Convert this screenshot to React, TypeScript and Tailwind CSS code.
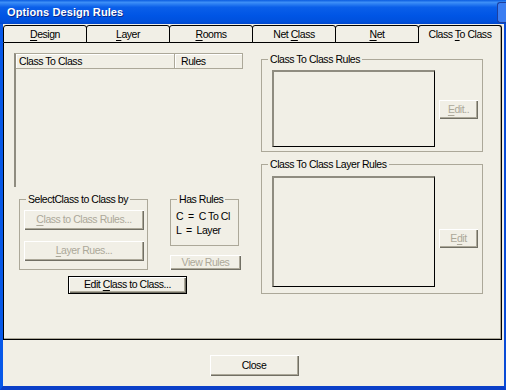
import clsx from "clsx";
import type { ReactNode } from "react";

// Win XP style "Options Design Rules" dialog, Class To Class tab

const FACE = "bg-[#f1efe6]";
const RAISED =
  "shadow-[inset_1px_1px_0_#fff,inset_-1px_-1px_0_#716f64,inset_-2px_-2px_0_#aca899]";

function U({ children }: { children: ReactNode }) {
  return <span className="underline decoration-1 underline-offset-[2px]">{children}</span>;
}

function Btn({
  children,
  disabled,
  isDefault,
  className,
}: {
  children: ReactNode;
  disabled?: boolean;
  isDefault?: boolean;
  className?: string;
}) {
  return (
    <div
      className={clsx(
        "flex shrink-0 whitespace-nowrap",
        isDefault && "border border-black",
        disabled ? "text-[#aca899]" : "text-black",
        className
      )}
    >
      <div className={clsx("flex flex-1 items-center justify-center pb-px", RAISED)}>
        {children}
      </div>
    </div>
  );
}

function Group({
  label,
  className,
  children,
}: {
  label: string;
  className?: string;
  children?: ReactNode;
}) {
  return (
    <div className={clsx("relative shrink-0 border border-[#aca899]", className)}>
      <span
        className={clsx(
          "absolute -top-[8px] left-[6px] whitespace-nowrap px-[2px] leading-[14px]",
          FACE
        )}
      >
        {label}
      </span>
      {children}
    </div>
  );
}

function ListBox({ className }: { className?: string }) {
  return (
    <div
      className={clsx(
        "shrink-0 border-t-2 border-l-2 border-r border-b border-t-[#8f8c80] border-l-[#8f8c80] border-r-black border-b-black",
        className
      )}
    />
  );
}

const TABS = [
  { u: "D", rest: "esign" },
  { u: "L", rest: "ayer" },
  { u: "R", rest: "ooms" },
  { pre: "Net ", u: "C", rest: "lass" },
  { u: "N", rest: "et" },
  { pre: "Class ", u: "T", rest: "o Class" },
];

export default function App() {
  return (
    <div className="flex h-[390px] w-[506px] flex-col bg-[#0b3fc8] font-['Liberation_Sans',Arial,sans-serif] text-[10.5px] leading-none tracking-[-0.45px] text-black">
      {/* title bar */}
      <div className="flex h-[24px] shrink-0 items-center bg-[linear-gradient(to_bottom,#0a5ce0_0%,#3d8ff7_10%,#0a5fe9_30%,#0055e5_65%,#0050dc_90%,#0046cc_100%)] pl-[7px]">
        <span className="pt-px text-[11px] font-bold tracking-[0.1px] text-white [text-shadow:1px_1px_0_#0c2a8a]">
          Options Design Rules
        </span>
        <div className="ml-auto mt-[1px] h-[21px] w-[9px] rounded-l-[3px] border-l border-t border-b border-[#1d3f9e] bg-[#3b7ef2]" />
      </div>

      {/* client area */}
      <div className="flex flex-1 flex-col border-l-[3px] border-r-[2px] border-b-[4px] border-l-[#0758e8] border-r-[#0a4bd6] border-b-[#0b3fc8]">
        <div className={clsx("flex flex-1 flex-col pt-px", FACE)}>
          {/* tabs */}
          <div className="flex h-[18px] w-[499px] shrink-0">
            {TABS.map((t, i) => {
              const active = i === TABS.length - 1;
              return (
                <div
                  key={i}
                  className={clsx(
                    "flex flex-1 items-center justify-center whitespace-nowrap rounded-t-[3px] border-t border-l border-r border-black pt-px",
                    i > 0 && "-ml-px",
                    active ? "border-b-0 pb-px shadow-[inset_-1px_0_0_#aca899]" : "border-b"
                  )}
                >
                  <span>
                    {t.pre}
                    <U>{t.u}</U>
                    {t.rest}
                  </span>
                </div>
              );
            })}
          </div>

          {/* tab page */}
          <div className="flex h-[297px] w-[499px] shrink-0 border-l border-r border-b border-black">
            <div className="flex flex-1 gap-[18px] pl-[10px] shadow-[inset_-1px_-1px_0_#aca899]">
              {/* left column */}
              <div className="flex w-[229px] flex-col pt-[10px]">
                <div className="flex h-[134px] flex-col border-l-2 border-t border-l-[#8f8c80] border-t-[#aca899]">
                  <div className="flex h-[15px]">
                    <div className="flex w-[159px] items-center border-r border-b border-[#aca899] pl-[3px] shadow-[inset_1px_1px_0_#fff]">
                      Class To Class
                    </div>
                    <div className="flex flex-1 items-center border-r border-b border-[#aca899] pl-[6px] shadow-[inset_1px_1px_0_#fff]">
                      Rules
                    </div>
                  </div>
                </div>

                <div className="mt-[12px] flex items-start">
                  <Group label="SelectClass to Class by" className="ml-[5px] flex h-[71px] w-[129px] flex-col gap-[11px] pl-[4px] pt-[10px]">
                    <Btn disabled className="h-[20px] w-[120px]">
                      <span>
                        <U>C</U>lass to Class Rules...
                      </span>
                    </Btn>
                    <Btn disabled className="h-[20px] w-[120px]">
                      <span>
                        <U>L</U>ayer Rues...
                      </span>
                    </Btn>
                  </Group>
                  <div className="ml-[22px] flex flex-col">
                    <Group label="Has Rules" className="flex h-[47px] w-[69px] flex-col gap-[3px] pl-[5px] pt-[11px]">
                      <span className="whitespace-pre">C  =  C To Cl</span>
                      <span className="whitespace-pre">L  =  Layer</span>
                    </Group>
                    <Btn disabled className="mt-[9px] h-[15px] w-[71px]">
                      <span>
                        <U>V</U>iew Rules
                      </span>
                    </Btn>
                  </div>
                </div>

                <Btn isDefault className="ml-[54px] mt-[6px] h-[18px] w-[119px]">
                  <span>
                    Edit <U>C</U>lass to Class...
                  </span>
                </Btn>
              </div>

              {/* right column */}
              <div className="flex w-[222px] flex-col pt-[16px]">
                <Group label="Class To Class Rules" className="flex h-[93px] items-start pl-[10px] pt-[10px]">
                  <ListBox className="h-[77px] w-[163px]" />
                  <Btn disabled className="ml-[4px] mt-[30px] h-[19px] w-[39px]">
                    <span>
                      <U>E</U>dit..
                    </span>
                  </Btn>
                </Group>
                <Group label="Class To Class Layer Rules" className="mt-[12px] flex h-[130px] items-start pl-[10px] pt-[11px]">
                  <ListBox className="h-[111px] w-[163px]" />
                  <Btn disabled className="ml-[4px] mt-[53px] h-[19px] w-[39px]">
                    <span>
                      E<U>d</U>it
                    </span>
                  </Btn>
                </Group>
              </div>
            </div>
          </div>

          {/* dialog buttons */}
          <div className="flex flex-1 justify-center pt-[15px] pl-[1px]">
            <Btn className="h-[21px] w-[89px]">Close</Btn>
          </div>
        </div>
      </div>
    </div>
  );
}
